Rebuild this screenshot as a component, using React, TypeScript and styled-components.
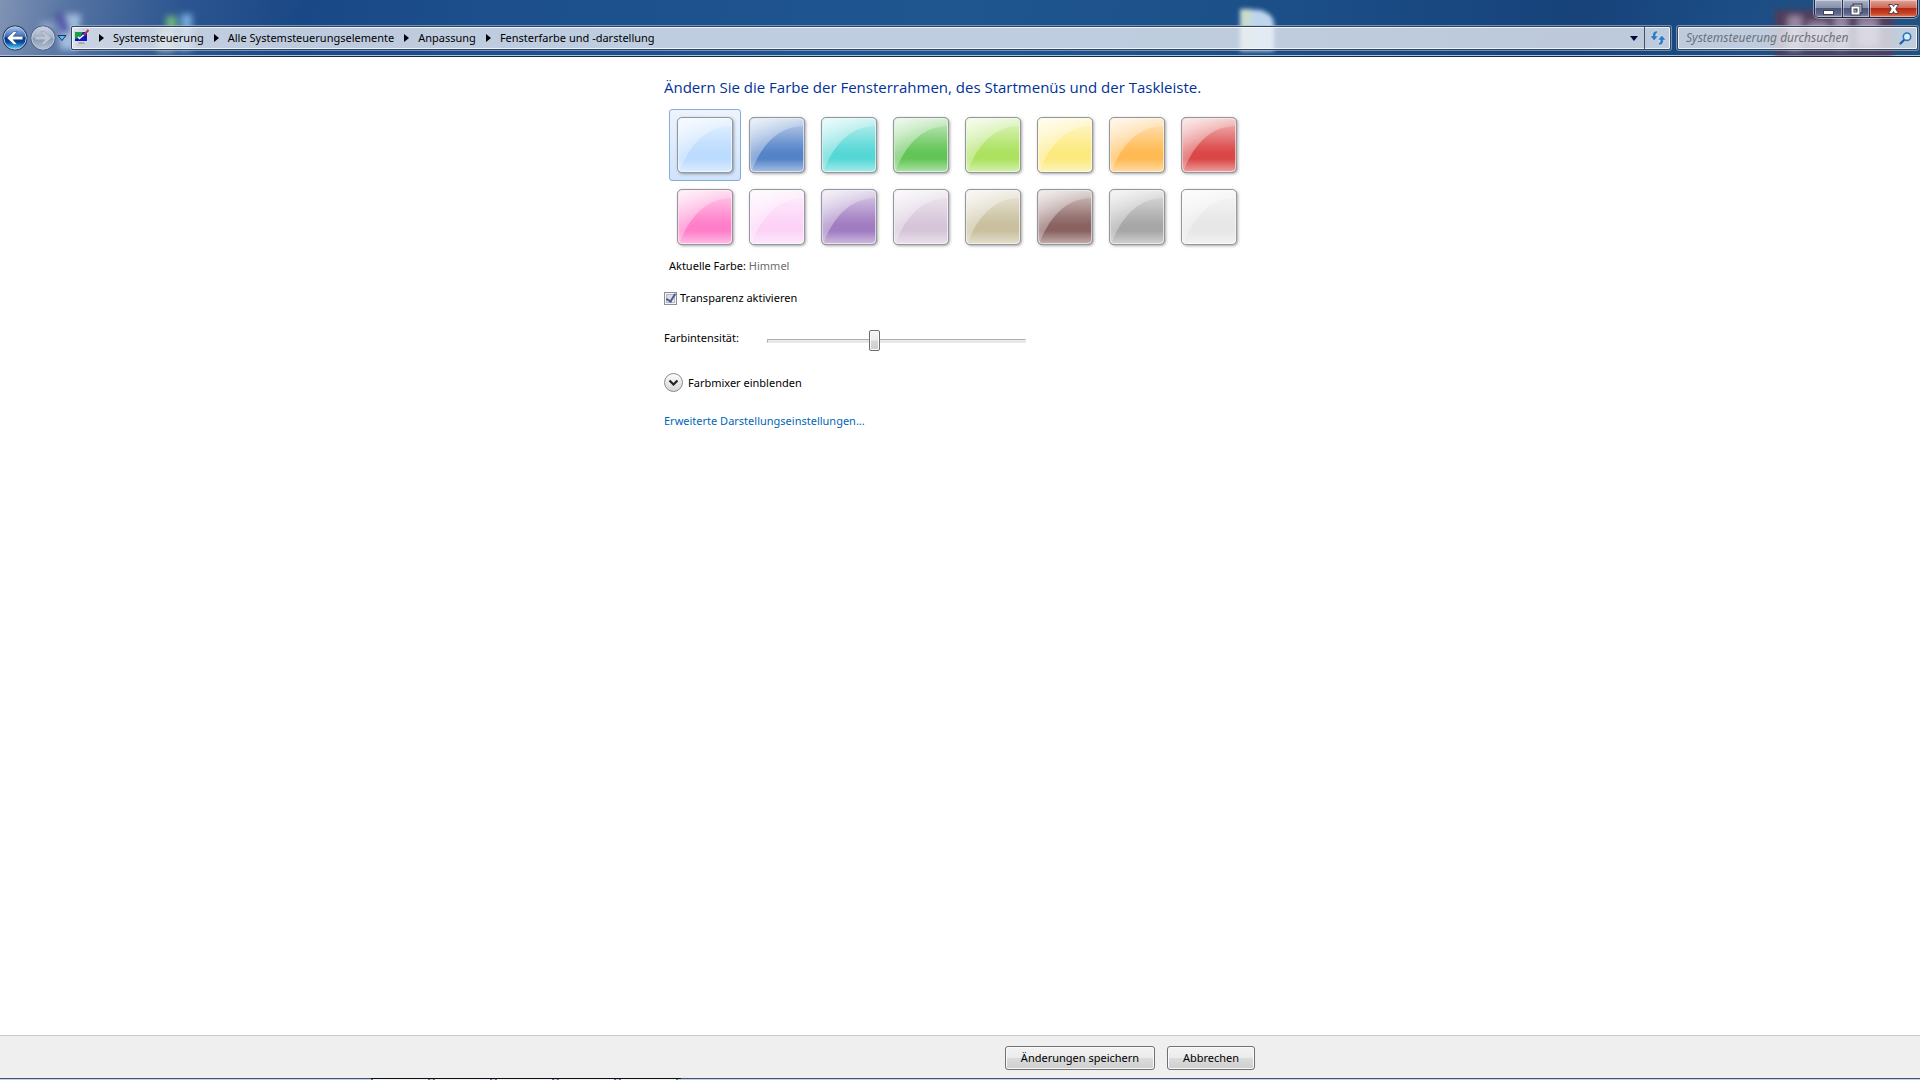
import React, { useState } from "react";
import styled, { createGlobalStyle } from "styled-components";

const GlobalStyle = createGlobalStyle`
  * { box-sizing: border-box; }
  body { margin: 0; background: #fff; }
  button, input { font: inherit; color: inherit; }
`;

const Window = styled.div`
  min-height: 100vh;
  display: flex;
  flex-direction: column;
  font-family: "Noto Sans", "Open Sans", sans-serif;
  font-size: 11px;
  line-height: 16px;
  color: #000;
`;

const Frame = styled.header`
  position: relative;
  overflow: hidden;
  background: linear-gradient(100deg, #8093b4 0, #5573a2 70px, #2c5590 180px, #1a4886 300px, #1c4f8c 480px, #1f5690 50%, #1c4f88 66%, #17427a 82%, #1c4d85 90%, #23527f 100%);
  border-bottom: 1px solid #16273f;
  box-shadow: inset 0 -1px 0 #aac3df;
`;

const Blurred = styled.svg`
  position: absolute;
  inset: 0;
  width: 100%;
  height: 100%;
`;

const TitleBar = styled.div`
  position: relative;
  display: flex;
  justify-content: flex-end;
  padding-right: 2px;
  height: 25px;
`;

const CaptionGroup = styled.div`
  display: flex;
  height: 18px;
  border: 1px solid #1b2742;
  border-top: 0;
  border-radius: 0 0 5px 5px;
  overflow: hidden;
  box-shadow: 0 0 0 1px rgba(210, 222, 240, 0.55);
`;

const CaptionButton = styled.button<{ $close?: boolean }>`
  width: ${(p) => (p.$close ? 48 : 27)}px;
  padding: 0;
  border: 0;
  border-left: 1px solid #26314f;
  box-shadow: inset 0 0 0 1px rgba(255, 255, 255, 0.4);
  background: ${(p) =>
    p.$close
      ? "linear-gradient(#e2a499 0, #cd6a58 45%, #b22a12 50%, #c8452a 80%, #e0805e)"
      : "linear-gradient(#a9b1c6 0, #8791ac 45%, #4b567c 50%, #5f6789 80%, #8b8fa9)"};
  display: flex;
  align-items: center;
  justify-content: center;
  &:first-child { border-left: 0; }
`;

const NavRow = styled.div`
  position: relative;
  display: flex;
  align-items: center;
  height: 31px;
  padding: 1px 2px 6px 1px;
`;

const NavButtons = styled.div`
  display: flex;
  align-items: center;
  margin-right: 4px;
`;

const NavButton = styled.button`
  padding: 0;
  border: 0;
  background: none;
  display: flex;
`;

const Field = styled.div`
  display: flex;
  height: 24px;
  border: 1px solid #33455f;
  border-radius: 2px;
  background: rgba(236, 240, 246, 0.78);
  box-shadow: 0 0 0 1px rgba(170, 190, 215, 0.6), inset 0 0 0 1px rgba(255, 255, 255, 0.75);
`;

const AddressBar = styled(Field)`
  flex: 1;
  min-width: 0;
  align-items: center;
`;

const Crumbs = styled.nav`
  flex: 1;
  display: flex;
  align-items: center;
  padding-left: 2px;
`;

const CrumbArrow = styled.svg`
  margin: 0 9px 0 10px;
`;

const CrumbButton = styled.button`
  padding: 0;
  border: 0;
  background: none;
  white-space: nowrap;
`;

const AddressTool = styled.button<{ $divided?: boolean }>`
  align-self: stretch;
  width: ${(p) => (p.$divided ? 26 : 20)}px;
  padding: 0;
  border: 0;
  border-left: ${(p) => (p.$divided ? "1px solid #3f5270" : "0")};
  background: none;
  display: flex;
  align-items: center;
  justify-content: center;
`;

const SearchBox = styled(Field)`
  width: 241px;
  margin-left: 6px;
  align-items: center;
  padding: 0 5px 0 8px;
`;

const SearchInput = styled.input`
  flex: 1;
  min-width: 0;
  padding: 0;
  border: 0;
  outline: 0;
  background: none;
  font-size: 12px;
  font-style: italic;
  &::placeholder { color: #6c7078; opacity: 1; }
`;

const Content = styled.main`
  flex: 1;
  padding: 18px 0;
`;

const Column = styled.div`
  width: 592px;
  max-width: 100%;
  margin: 0 auto;
`;

const Heading = styled.h1`
  margin: 0 0 10px;
  font-family: "Open Sans", "Noto Sans", sans-serif;
  font-size: 15px;
  line-height: 24px;
  font-weight: 400;
  color: #003399;
  white-space: nowrap;
`;

const SwatchGrid = styled.div`
  display: grid;
  grid-template-columns: repeat(8, 72px);
  padding-left: 5px;
`;

const SwatchButton = styled.button<{ $selected: boolean }>`
  width: 72px;
  height: 72px;
  padding: 7px;
  border: 1px solid ${(p) => (p.$selected ? "#84acdd" : "transparent")};
  border-radius: 3px;
  background: ${(p) => (p.$selected ? "linear-gradient(#ecf4fd, #cfe3fb)" : "none")};
`;

const Swatch = styled.span<{ $color: string }>`
  display: block;
  height: 56px;
  border: 1px solid #94979e;
  border-radius: 5px;
  background: linear-gradient(rgba(255, 255, 255, 0.66) 0, rgba(255, 255, 255, 0.14) 50%, rgba(255, 255, 255, 0.03) 65%, rgba(255, 255, 255, 0.03) 76%, rgba(255, 255, 255, 0.5) 100%), ${(p) => p.$color};
  box-shadow: 1px 1px 3px rgba(0, 0, 0, 0.35);
  svg { display: block; }
`;

const CurrentColor = styled.p`
  margin: 5px 0 16px 5px;
`;

const ColorName = styled.span`
  color: #6d6d6d;
`;

const CheckLabel = styled.label`
  display: flex;
  align-items: center;
  gap: 3px;
`;

const CheckBox = styled.input`
  appearance: none;
  width: 13px;
  height: 13px;
  margin: 0;
  border: 1px solid #8e8f8f;
  background: linear-gradient(135deg, #cbcfd5, #f6f6f6);
  box-shadow: inset 0 0 0 1px #f4f4f4, inset 0 0 0 2px #b4bac4;
  display: grid;
  place-items: center;
  &:checked::before {
    content: "";
    width: 4px;
    height: 8px;
    margin-top: -2px;
    border: solid #4a5f97;
    border-width: 0 2px 2px 0;
    transform: rotate(32deg);
  }
`;

const SliderRow = styled.div`
  display: flex;
  align-items: center;
  margin-top: 20px;
  height: 28px;
`;

const SliderLabel = styled.label`
  width: 103px;
  padding-bottom: 4px;
`;

const Slider = styled.input`
  appearance: none;
  width: 259px;
  height: 22px;
  margin: 2px 0 0;
  background: none;
  &::-webkit-slider-runnable-track {
    height: 4px;
    border: 1px solid #e7eaea;
    border-top-color: #b0b0b0;
    border-left-color: #b0b0b0;
    background: #e7eaea;
  }
  &::-webkit-slider-thumb {
    appearance: none;
    width: 11px;
    height: 21px;
    margin-top: -10px;
    border: 1px solid #6d6d6d;
    border-radius: 2px;
    background: linear-gradient(#f5f5f5 0, #ececec 48%, #d8d8d8 52%, #cbcbcb);
    box-shadow: inset 0 0 0 1px #fafafa;
  }
`;

const Expander = styled.button`
  display: flex;
  align-items: center;
  gap: 4px;
  margin: 19px 0 20px;
  padding: 0;
  border: 0;
  background: none;
`;

const Link = styled.a`
  color: #0066b5;
  text-decoration: none;
`;

const Footer = styled.footer`
  padding: 10px 0 8px;
  background: #efefef;
  border-top: 1px solid #c5cac9;
`;

const Actions = styled(Column)`
  display: flex;
  justify-content: flex-end;
  gap: 12px;
  padding-right: 1px;
`;

const PushButton = styled.button<{ $wide?: boolean }>`
  width: ${(p) => (p.$wide ? 150 : 88)}px;
  height: 24px;
  padding: 0;
  border: 1px solid #707070;
  border-radius: 3px;
  background: linear-gradient(#f3f3f3 0, #ebebeb 50%, #dcdcdc 50%, #cecece);
  box-shadow: inset 0 0 0 1px #fbfbfb;
`;

const TaskEdge = styled.div`
  display: flex;
  height: 2px;
  padding-left: 371px;
  background: linear-gradient(#40536f 1px, #c3d3e8 1px);
`;

const TaskTab = styled.span`
  width: 62px;
  height: 2px;
  border-top: 1px solid #0c0f14;
  background: linear-gradient(90deg, #6a7585 2px, #eef1f5 2px, #eef1f5 57px, #6a7585 57px, #6a7585 59px, #c3d3e8 59px);
`;

const swatches = [
  ["Himmel", "#b9daff"], ["Dämmerung", "#4f7fc6"], ["Meer", "#50d6d5"], ["Blatt", "#5ec351"],
  ["Limone", "#a9e15b"], ["Sonne", "#fce97a"], ["Kürbis", "#ffb84e"], ["Rubin", "#d94141"],
  ["Fuchsia", "#ff7ac8"], ["Erröten", "#fcd2f7"], ["Veilchen", "#9d78bf"], ["Lavendel", "#d5c3d8"],
  ["Taupe", "#c8be9c"], ["Schokolade", "#865e5c"], ["Schiefer", "#a4a4a4"], ["Frost", "#e6e6e6"],
];

const crumbs = ["Systemsteuerung", "Alle Systemsteuerungselemente", "Anpassung", "Fensterfarbe und -darstellung"];

const Backdrop = () => (
  <Blurred aria-hidden="true">
    <defs>
      <filter id="soft" x="-50%" y="-50%" width="200%" height="200%"><feGaussianBlur stdDeviation="3" /></filter>
      <filter id="slight" x="-50%" y="-50%" width="200%" height="200%"><feGaussianBlur stdDeviation="2" /></filter>
    </defs>
    <g filter="url(#soft)">
      <path d="M56 14h25l-4 36H60z" fill="#aac3e4" opacity=".9" />
      <path d="M54 13h11l6 18-10 4z" fill="#4d51a3" opacity=".9" />
      <path d="M40 22h14v10H40z" fill="#a9bbd8" opacity=".6" />
      <path d="M166 16h11v13h-11z" fill="#71b47c" />
      <path d="M181 14h11v15h-11z" fill="#73aadc" />
      <path d="M157 30h18v22h-18z" fill="#b9cfb9" opacity=".7" />
      <path d="M178 30h14v21h-14z" fill="#8eb6dc" opacity=".7" />
    </g>
    <g filter="url(#slight)">
      <path d="M1240 9l20 1q14 4 14 14v27h-34z" fill="#bfd5ee" />
      <path d="M1241 9h10v42h-10z" fill="#c9dccb" />
    </g>
    <svg x="100%" overflow="visible">
      <g filter="url(#soft)">
        <path d="M-145 10h118v46h-118z" fill="#63344d" opacity=".75" />
        <path d="M-132 16h14v34h-14zM-112 22h20v24h-20zM-86 16h14v32h-14zM-62 18h20v28h-20z" fill="#b9a8bd" opacity=".7" />
      </g>
    </svg>
  </Blurred>
);

const Orb = ({ forward }: { forward?: boolean }) => {
  const id = forward ? "orb-forward" : "orb-back";
  return (
    <svg width="28" height="26" viewBox="0 0 28 26" aria-hidden="true">
      <defs>
        <linearGradient id={id} x2="0" y2="1">
          {forward ? (
            <><stop offset="0" stopColor="#c9d2e0" /><stop offset=".48" stopColor="#a3afc4" /><stop offset=".52" stopColor="#8a98b1" /><stop offset="1" stopColor="#b3c1d6" /></>
          ) : (
            <><stop offset="0" stopColor="#a9c4e8" /><stop offset=".42" stopColor="#3f6fb8" /><stop offset=".5" stopColor="#08307f" /><stop offset=".7" stopColor="#0b4ca4" /><stop offset="1" stopColor="#5fe0ff" /></>
          )}
        </linearGradient>
      </defs>
      <circle cx="14" cy="13" r="12.5" fill={forward ? "#4c6488" : "#1d335c"} />
      <circle cx="14" cy="13" r="11.200" fill={`url(#${id})`} stroke={forward ? "#c3cedd" : "#b5cbe6"} strokeWidth="1" />
      <g transform={forward ? "matrix(-1 0 0 1 28 0)" : undefined}>
        <path d="M6 13 12.800 6.500H16.200L12.200 11.300H21.800V14.700H12.200L16.200 19.500H12.800Z" fill={forward ? "#bcc6d5" : "#fff"} stroke={forward ? "#94a1b8" : "#274f8f"} strokeWidth=".6" />
      </g>
    </svg>
  );
};

const Gloss = () => (
  <svg width="54" height="54" viewBox="0 0 54 54" aria-hidden="true">
    <defs>
      <linearGradient id="gloss" x1="0" y1="0" x2=".65" y2=".65">
        <stop offset="0" stopColor="#fff" stopOpacity=".7" />
        <stop offset="1" stopColor="#fff" stopOpacity=".12" />
      </linearGradient>
    </defs>
    <path d="M1 52V4q0-3 3-3h46q3 0 3 3v4C31 9 14 22 2 52z" fill="url(#gloss)" />
    <rect x=".5" y=".5" width="53" height="53" rx="4" fill="none" stroke="#fff" strokeOpacity=".6" />
  </svg>
);

export default function App() {
  const [selected, setSelected] = useState("Himmel");
  return (
    <Window>
      <GlobalStyle />
      <Frame>
        <Backdrop />
        <TitleBar>
          <CaptionGroup>
            <CaptionButton aria-label="Minimieren">
              <svg width="13" height="14"><rect x="1.500" y="8.500" width="10" height="4" fill="#fff" stroke="#3c4358" /></svg>
            </CaptionButton>
            <CaptionButton aria-label="Verkleinern">
              <svg width="13" height="14" fill="none">
                <path d="M4.500 3.500h6v6h-6z" stroke="#3c4358" strokeWidth="4" />
                <path d="M4.500 3.500h6v6h-6z" stroke="#fff" strokeWidth="1.500" />
                <path d="M2.500 5.500h6v6h-6z" stroke="#3c4358" strokeWidth="4" />
                <path d="M2.500 5.500h6v6h-6z" stroke="#fff" strokeWidth="2" />
              </svg>
            </CaptionButton>
            <CaptionButton $close aria-label="Schließen">
              <svg width="13" height="14">
                <path d="M1.500 2.500h3.700l1.300 2 1.300-2h3.700L8.700 7l2.800 4.500H7.800L6.500 9.500l-1.300 2H1.500L4.300 7z" fill="#fff" stroke="#4b3a48" strokeWidth=".9" />
              </svg>
            </CaptionButton>
          </CaptionGroup>
        </TitleBar>
        <NavRow>
          <NavButtons>
            <NavButton aria-label="Zurück"><Orb /></NavButton>
            <NavButton aria-label="Vorwärts"><Orb forward /></NavButton>
            <NavButton aria-label="Zuletzt besuchte Seiten">
              <svg width="10" height="8"><path d="M1 1.500h8L5 6.500z" fill="#63b7ea" stroke="#173763" /></svg>
            </NavButton>
          </NavButtons>
          <AddressBar>
            <Crumbs aria-label="Adresse">
              <svg width="15" height="18" viewBox="0 0 15 18" aria-hidden="true">
                <path d="M0 2h14v11H0z" fill="#d7dbe0" />
                <path d="M1 3h12v9H1z" fill="#1015c2" />
                <path d="M1 3h8L6 8 1 10z" fill="#14a045" />
                <path d="M5 13h5l1 2H4z" fill="#a9adb2" />
                <path d="M2 15h10v2H2z" fill="#d2d0c8" />
                <path d="M14.500 1 9 7" stroke="#b9314d" strokeWidth="2" />
                <path d="M9.500 6 5.500 9.500 4 8" fill="none" stroke="#fff" strokeWidth="1.500" />
              </svg>
              {crumbs.map((name) => (
                <React.Fragment key={name}>
                  <CrumbArrow width="5" height="8" aria-hidden="true"><path d="M0 0l5 4-5 4z" /></CrumbArrow>
                  <CrumbButton>{name}</CrumbButton>
                </React.Fragment>
              ))}
            </Crumbs>
            <AddressTool aria-label="Vorherige Orte">
              <svg width="8" height="5"><path d="M0 0h8L4 5z" fill="#000a3c" /></svg>
            </AddressTool>
            <AddressTool $divided aria-label="Aktualisieren">
              <svg width="16" height="16" viewBox="0 0 16 16" fill="#2f7cc4" stroke="#fff" strokeWidth=".4">
                <path d="M7.500 1C3.500.8 2.500 3 2.500 6H0l4.200 4.800L8.200 6H5.700C5.700 4 6 3.200 7.500 3z" />
                <path d="M8.500 15c4 .2 5-2 5-5H16l-4.200-4.800L7.800 10h2.500c0 2-.3 2.800-1.800 3z" />
              </svg>
            </AddressTool>
          </AddressBar>
          <SearchBox>
            <SearchInput type="search" aria-label="Systemsteuerung durchsuchen" placeholder="Systemsteuerung durchsuchen" />
            <svg width="13" height="13" viewBox="0 0 13 13" fill="none" aria-hidden="true">
              <path d="M1.500 11.500 5.500 7.500" stroke="#2159ac" strokeWidth="2.200" strokeLinecap="round" />
              <circle cx="8" cy="4.700" r="3.700" fill="#dcecf8" stroke="#2a76c2" strokeWidth="1.600" />
            </svg>
          </SearchBox>
        </NavRow>
      </Frame>
      <Content>
        <Column>
          <Heading>Ändern Sie die Farbe der Fensterrahmen, des Startmenüs und der Taskleiste.</Heading>
          <SwatchGrid>
            {swatches.map(([name, color]) => (
              <SwatchButton key={name} $selected={name === selected} aria-label={name} aria-pressed={name === selected} onClick={() => setSelected(name)}>
                <Swatch $color={color}><Gloss /></Swatch>
              </SwatchButton>
            ))}
          </SwatchGrid>
          <CurrentColor>Aktuelle Farbe: <ColorName>{selected}</ColorName></CurrentColor>
          <CheckLabel><CheckBox type="checkbox" defaultChecked />Transparenz aktivieren</CheckLabel>
          <SliderRow>
            <SliderLabel htmlFor="intensity">Farbintensität:</SliderLabel>
            <Slider id="intensity" type="range" min="0" max="100" defaultValue="41" />
          </SliderRow>
          <Expander>
            <svg width="20" height="20" viewBox="0 0 20 20" aria-hidden="true">
              <defs><linearGradient id="expander" x2="0" y2="1"><stop stopColor="#fdfdfd" /><stop offset="1" stopColor="#d5d5d5" /></linearGradient></defs>
              <circle cx="9.500" cy="9.500" r="9" fill="url(#expander)" stroke="#8a8a8a" />
              <path d="M5.500 7.500 9.500 11.500 13.500 7.500" fill="none" stroke="#222" strokeWidth="2.200" />
            </svg>
            Farbmixer einblenden
          </Expander>
          <Link href="#">Erweiterte Darstellungseinstellungen...</Link>
        </Column>
      </Content>
      <Footer>
        <Actions>
          <PushButton $wide>Änderungen speichern</PushButton>
          <PushButton>Abbrechen</PushButton>
        </Actions>
      </Footer>
      <TaskEdge>
        <TaskTab /><TaskTab /><TaskTab /><TaskTab /><TaskTab />
      </TaskEdge>
    </Window>
  );
}
